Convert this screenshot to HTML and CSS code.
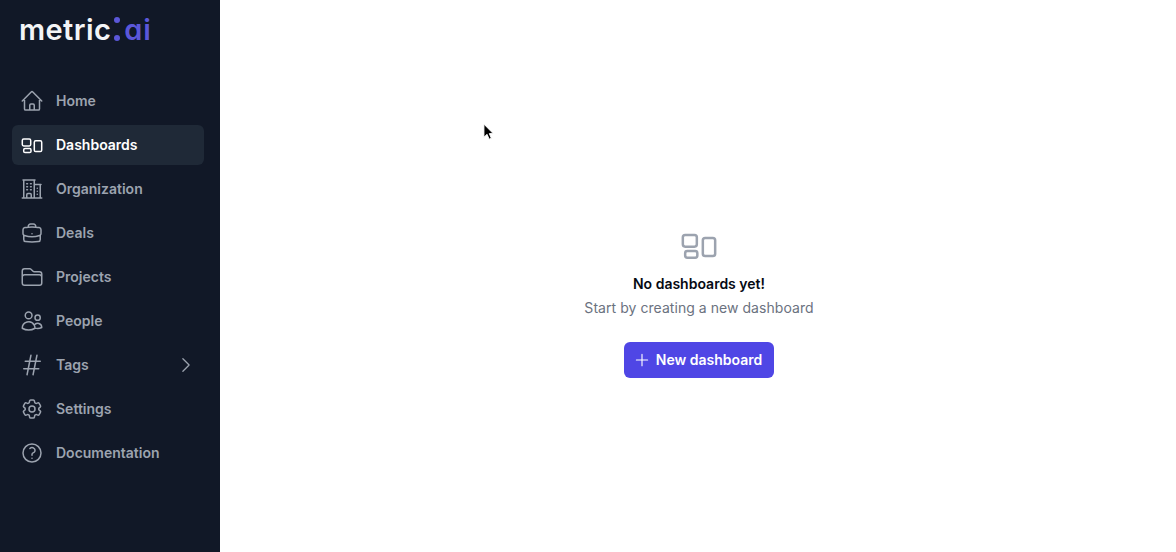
FILE: index.html
```html
<!DOCTYPE html>
<html lang="en">
<head>
<meta charset="utf-8">
<title>metric:ai</title>
<link rel="stylesheet" href="styles.css">
</head>
<body>
<div class="app">
  <aside class="sidebar">
    <div class="logo"><span class="logo-metric">metric</span><span class="logo-colon"><i></i><i></i></span><span class="logo-ai">ai</span></div>
    <nav class="nav">
      <a class="nav-item"><svg class="icon" viewBox="0 0 24 24"><path d="M2.25 12l8.954-8.955c.44-.439 1.152-.439 1.591 0L21.75 12M4.5 9.75v10.125c0 .621.504 1.125 1.125 1.125H9.75v-4.875c0-.621.504-1.125 1.125-1.125h2.25c.621 0 1.125.504 1.125 1.125V21h4.125c.621 0 1.125-.504 1.125-1.125V9.75M8.25 21h8.25"/></svg><span class="nav-label">Home</span></a>
      <a class="nav-item active"><svg class="icon" viewBox="0 0 24 24"><rect x="2.3" y="6" width="8.4" height="7" rx="1.4"/><rect x="3.7" y="15.6" width="7.3" height="4" rx="1.3"/><rect x="14.3" y="7.8" width="7.4" height="10.8" rx="1.4"/></svg><span class="nav-label">Dashboards</span></a>
      <a class="nav-item"><svg class="icon" viewBox="0 0 24 24"><path d="M2.25 21h19.5m-18-18v18m10.5-18v18m6-13.5V21M6.75 6.75h.75m-.75 3h.75m-.75 3h.75m3-6h.75m-.75 3h.75m-.75 3h.75M6.75 21v-3.375c0-.621.504-1.125 1.125-1.125h2.25c.621 0 1.125.504 1.125 1.125V21M3 3h12m-.75 4.5H21m-3.75 3.75h.008v.008h-.008v-.008zm0 3h.008v.008h-.008v-.008zm0 3h.008v.008h-.008v-.008z"/></svg><span class="nav-label">Organization</span></a>
      <a class="nav-item"><svg class="icon" viewBox="0 0 24 24"><path d="M20.25 14.15v4.25c0 1.094-.787 2.036-1.872 2.18-2.087.277-4.216.42-6.378.42s-4.291-.143-6.378-.42c-1.085-.144-1.872-1.086-1.872-2.18v-4.25m16.5 0a2.18 2.18 0 00.75-1.661V8.706c0-1.081-.768-2.015-1.837-2.175a48.114 48.114 0 00-3.413-.387m4.5 8.006c-.194.165-.42.295-.673.38A23.978 23.978 0 0112 15.75c-2.648 0-5.195-.429-7.577-1.22a2.016 2.016 0 01-.673-.38m0 0A2.18 2.18 0 013 12.489V8.706c0-1.081.768-2.015 1.837-2.175a48.111 48.111 0 013.413-.387m7.5 0V5.25A2.25 2.25 0 0013.5 3h-3a2.25 2.25 0 00-2.25 2.25v.894m7.5 0a48.667 48.667 0 00-7.5 0M12 12.75h.008v.008H12v-.008z"/></svg><span class="nav-label">Deals</span></a>
      <a class="nav-item"><svg class="icon" viewBox="0 0 24 24"><path d="M2.25 12.75V12A2.25 2.25 0 014.5 9.75h15A2.25 2.25 0 0121.75 12v.75m-8.69-6.44l-2.12-2.12a1.5 1.5 0 00-1.061-.44H4.5A2.25 2.25 0 002.25 6v12a2.25 2.25 0 002.25 2.25h15A2.25 2.25 0 0021.75 18V9a2.25 2.25 0 00-2.25-2.25h-5.379a1.5 1.5 0 01-1.06-.44z"/></svg><span class="nav-label">Projects</span></a>
      <a class="nav-item"><svg class="icon" viewBox="0 0 24 24"><path d="M15 19.128a9.38 9.38 0 002.625.372 9.337 9.337 0 004.121-.952 4.125 4.125 0 00-7.533-2.493M15 19.128v-.003c0-1.113-.285-2.16-.786-3.07M15 19.128v.106A12.318 12.318 0 018.624 21c-2.331 0-4.512-.645-6.374-1.766l-.001-.109a6.375 6.375 0 0111.964-3.07M12 6.375a3.375 3.375 0 11-6.75 0 3.375 3.375 0 016.75 0zm8.25 2.25a2.625 2.625 0 11-5.25 0 2.625 2.625 0 015.25 0z"/></svg><span class="nav-label">People</span></a>
      <a class="nav-item"><svg class="icon" viewBox="0 0 24 24"><path d="M5.25 8.25h15m-16.5 7.5h15m-1.8-13.5l-3.9 19.5m-2.1-19.5l-3.9 19.5"/></svg><span class="nav-label">Tags</span><svg class="chevron" viewBox="0 0 24 24"><path d="M8.25 4.5l7.5 7.5-7.5 7.5"/></svg></a>
      <a class="nav-item"><svg class="icon" viewBox="0 0 24 24"><path d="M9.594 3.94c.09-.542.56-.94 1.11-.94h2.593c.55 0 1.02.398 1.11.94l.213 1.281c.063.374.313.686.645.87.074.04.147.083.22.127.324.196.72.257 1.075.124l1.217-.456a1.125 1.125 0 011.37.49l1.296 2.247a1.125 1.125 0 01-.26 1.431l-1.003.827c-.293.24-.438.613-.431.992a6.759 6.759 0 010 .255c-.007.378.138.75.43.99l1.005.828c.424.35.534.954.26 1.43l-1.298 2.247a1.125 1.125 0 01-1.369.491l-1.217-.456c-.355-.133-.75-.072-1.076.124a6.57 6.57 0 01-.22.128c-.331.183-.581.495-.644.869l-.213 1.28c-.09.543-.56.941-1.11.941h-2.594c-.55 0-1.02-.398-1.11-.94l-.213-1.281c-.062-.374-.312-.686-.644-.87a6.52 6.52 0 01-.22-.127c-.325-.196-.72-.257-1.076-.124l-1.217.456a1.125 1.125 0 01-1.369-.49l-1.297-2.247a1.125 1.125 0 01.26-1.431l1.004-.827c.292-.24.437-.613.43-.992a6.932 6.932 0 010-.255c.007-.378-.138-.75-.43-.99l-1.004-.828a1.125 1.125 0 01-.26-1.43l1.297-2.247a1.125 1.125 0 011.37-.491l1.216.456c.356.133.751.072 1.076-.124.072-.044.146-.087.22-.128.332-.183.582-.495.644-.869l.214-1.281z"/><path d="M15 12a3 3 0 11-6 0 3 3 0 016 0z"/></svg><span class="nav-label">Settings</span></a>
      <a class="nav-item"><svg class="icon" viewBox="0 0 24 24"><path d="M9.879 7.519c1.171-1.025 3.071-1.025 4.242 0 1.172 1.025 1.172 2.687 0 3.712-.203.179-.43.326-.67.442-.745.361-1.45.999-1.45 1.827v.75M21 12a9 9 0 11-18 0 9 9 0 0118 0zm-9 5.25h.008v.008H12v-.008z"/></svg><span class="nav-label">Documentation</span></a>
    </nav>
  </aside>
  <main class="main">
    <svg class="empty-icon" viewBox="0 0 24 24"><rect x="2.3" y="6" width="8.4" height="7" rx="1.4"/><rect x="3.7" y="15.6" width="7.3" height="4" rx="1.3"/><rect x="14.3" y="7.8" width="7.4" height="10.8" rx="1.4"/></svg>
    <h1 class="empty-title">No dashboards yet!</h1>
    <p class="empty-text">Start by creating a new dashboard</p>
    <button class="new-button" type="button"><svg class="plus" viewBox="0 0 24 24"><path d="M12 4.5v15m7.5-7.5h-15"/></svg><span class="button-label">New dashboard</span></button>
  </main>
</div>
<svg class="cursor" viewBox="0 0 14 20"><path d="M1 1v14l3.4-3 2.2 5.2 2.4-1-2.2-5H11z"/></svg>
</body>
</html>
```
FILE: styles.css
```css
* { box-sizing: border-box; }
html, body { margin: 0; height: 100%; }
body {
  font-family: Inter, "Liberation Sans", sans-serif;
  background: #fff;
  overflow: hidden;
}
.app { display: flex; height: 552px; }
.sidebar {
  width: 220px;
  flex: none;
  background: #111827;
  padding: 12px 16px 0 12px;
}
.logo {
  display: flex;
  align-items: center;
  height: 36px;
  padding-left: 7px;
  font-size: 29px;
  font-weight: 600;
  line-height: 36px;
  font-feature-settings: "cv11" 1;
}
.logo-metric { color: #f3f4f6; letter-spacing: 0.4px; }
.logo-ai { color: #5b57d9; letter-spacing: 0.9px; }
.logo-colon {
  display: flex;
  flex-direction: column;
  gap: 12px;
  margin: -3px 4px 0 3px;
}
.logo-colon i {
  display: block;
  width: 6px;
  height: 6px;
  border-radius: 50%;
  background: #5b57d9;
}
.nav {
  display: flex;
  flex-direction: column;
  gap: 4px;
  margin-top: 33px;
}
.nav-item {
  display: flex;
  align-items: center;
  gap: 12px;
  height: 40px;
  padding: 0 8px;
  border-radius: 6px;
  color: #9ca3af;
  font-size: 14px;
  font-weight: 600;
}
.nav-label { padding-bottom: 2px; }
.nav-item.active { background: #1f2937; color: #fff; }
.icon, .chevron, .plus, .empty-icon {
  fill: none;
  stroke: currentColor;
  stroke-width: 1.5;
  stroke-linecap: round;
  stroke-linejoin: round;
  flex: none;
}
.icon { width: 24px; height: 24px; }
.chevron { width: 20px; height: 20px; margin-left: auto; }
.main {
  flex: 1;
  display: flex;
  flex-direction: column;
  align-items: center;
  padding: 225px 0 0 2px;
}
.empty-icon { width: 40px; height: 40px; color: #9ca3af; }
.empty-title {
  margin: 9px 0 0;
  font-size: 14px;
  line-height: 20px;
  font-weight: 600;
  color: #060a13;
}
.empty-text {
  margin: 4px 0 0;
  font-size: 14px;
  line-height: 20px;
  color: #6b7280;
  letter-spacing: 0.05px;
}
.new-button {
  display: flex;
  align-items: center;
  gap: 5px;
  height: 36px;
  margin-top: 24px;
  padding: 0 12px 0 9px;
  border: 0;
  border-radius: 6px;
  background: #4f46e5;
  color: #fff;
  font-family: inherit;
  font-size: 14px;
  font-weight: 600;
}
.button-label { padding-bottom: 2px; }
.plus { width: 18px; height: 18px; }
.cursor {
  position: absolute;
  left: 483px;
  top: 123px;
  width: 13px;
  height: 19px;
  fill: #000;
  stroke: #fff;
  stroke-width: 1;
}
```
